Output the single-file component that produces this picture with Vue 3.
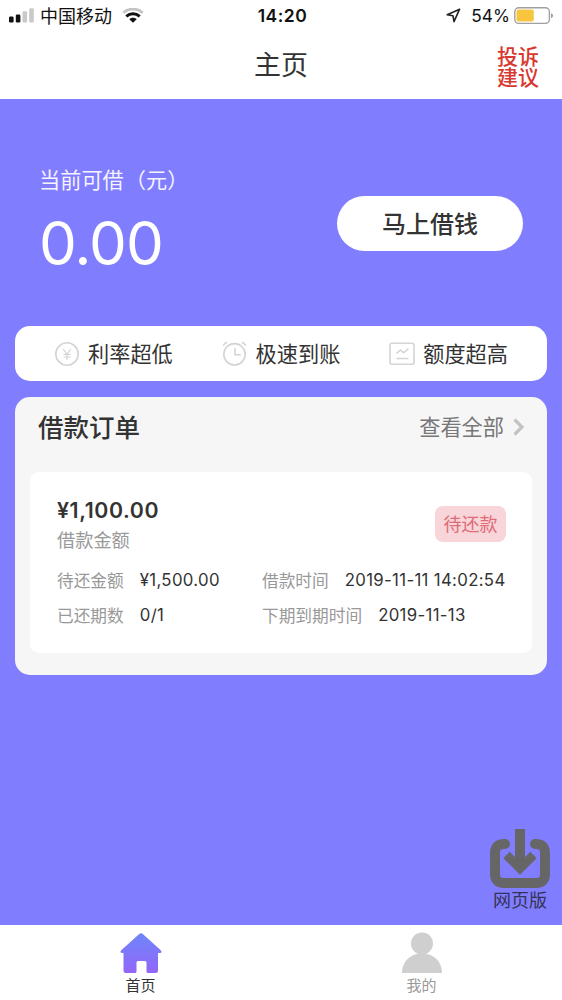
<script setup>
const features = [
  { icon: 'yen', label: '利率超低' },
  { icon: 'clock', label: '极速到账' },
  { icon: 'chart', label: '额度超高' },
]
const details = [
  [
    { label: '待还金额', value: '¥1,500.00' },
    { label: '借款时间', value: '2019-11-11 14:02:54' },
  ],
  [
    { label: '已还期数', value: '0/1' },
    { label: '下期到期时间', value: '2019-11-13' },
  ],
]
</script>

<template>
  <div class="screen">
    <header>
      <div class="status">
        <div class="carrier">
          <svg width="26" height="16" viewBox="0 0 26 16">
            <rect x="0" y="8.5" width="4.6" height="6" rx="1.3" fill="#111" />
            <rect x="6.8" y="6.5" width="4.6" height="8" rx="1.3" fill="#111" />
            <rect x="13.5" y="3.3" width="4.6" height="11.2" rx="1.3" fill="#c9c9c9" />
            <rect x="20.2" y=".2" width="4.6" height="14.3" rx="1.3" fill="#c9c9c9" />
          </svg>
          <span class="carrier-name">中国移动</span>
          <svg class="wifi" width="22" height="16" viewBox="0 0 22 16" fill="none">
            <path d="M1.3 4.8C6.6-.2 15.4-.2 20.7 4.8" stroke="#c4c4c4" stroke-width="2.7" />
            <path d="M4.3 8.3C8.2 4.9 13.8 4.9 17.7 8.3" stroke="#111" stroke-width="3" />
            <path d="M7.3 11.3C9.3 9.3 12.7 9.3 14.7 11.3L11 14.8Z" fill="#111" />
          </svg>
        </div>
        <span class="time">14:20</span>
        <div class="power">
          <svg width="15" height="15" viewBox="0 0 15 15">
            <path d="M13.6 1.2 1.2 6.8l5.8 1 1 5.8z" fill="none" stroke="#222" stroke-width="1.6" stroke-linejoin="round" />
          </svg>
          <span class="percent">54%</span>
          <svg width="41" height="18" viewBox="0 0 41 18">
            <rect x=".8" y=".8" width="34.6" height="15.6" rx="4" fill="#fff" stroke="#a0a0a0" stroke-width="1.4" />
            <rect x="2.5" y="2.6" width="17.3" height="12" rx="2" fill="#f7c63e" />
            <path d="M37 6.2c2.8.8 2.8 4 0 4.8z" fill="#a0a0a0" />
          </svg>
        </div>
      </div>
      <div class="navbar">
        <h1>主页</h1>
        <a class="feedback"><span>投诉</span><span>建议</span></a>
      </div>
    </header>

    <main>
      <section class="hero">
        <div>
          <p class="hero-label">当前可借<span class="unit">（元）</span></p>
          <p class="hero-amount">0.00</p>
        </div>
        <button class="borrow">马上借钱</button>
      </section>

      <section class="features">
        <div v-for="f in features" :key="f.icon" class="feature">
          <svg width="26" height="26" viewBox="0 0 26 26" fill="none" stroke="#d4d4d4" stroke-width="1.6">
            <template v-if="f.icon === 'yen'">
              <circle cx="13" cy="13" r="11.2" />
              <path d="m9.2 8 3.8 5.3L16.8 8M13 13v6M9.5 13.3h7M9.5 16h7" stroke-width="1.2" />
            </template>
            <template v-else-if="f.icon === 'clock'">
              <circle cx="12.5" cy="13.3" r="10.7" />
              <path d="M13 7.3v6.5H18.8M1.2 4.6C2 3 3.4 1.9 5 1.3M20 1.3C21.6 1.9 23 3 23.8 4.6" />
            </template>
            <template v-else>
              <rect x="1" y="2.3" width="24" height="21" rx="2" />
              <path d="m7.5 12.5 4-3.5 3 2.8 5-4.3M7.5 17.5h12" />
            </template>
          </svg>
          <span>{{ f.label }}</span>
        </div>
      </section>

      <section class="orders">
        <div class="orders-head">
          <h2>借款订单</h2>
          <a class="more">
            <span>查看全部</span>
            <svg width="12" height="18" viewBox="0 0 12 18" fill="none" stroke="#c3c3c5" stroke-width="3.2">
              <path d="m1.5 1.5 7.5 7.5-7.5 7.5" />
            </svg>
          </a>
        </div>
        <article class="order">
          <div class="order-top">
            <div>
              <p class="amount">¥1,100.00</p>
              <p class="amount-label">借款金额</p>
            </div>
            <span class="badge">待还款</span>
          </div>
          <div v-for="(row, i) in details" :key="i" class="row">
            <div v-for="d in row" :key="d.label" class="detail">
              <span class="key">{{ d.label }}</span>
              <span class="value">{{ d.value }}</span>
            </div>
          </div>
        </article>
      </section>

      <a class="web">
        <svg width="62" height="62" viewBox="0 0 62 62" fill="none" stroke="#666" stroke-width="10">
          <path d="M16 16h-1C9 16 6 19 6 25v21c0 6 3 9 9 9h32c6 0 9-3 9-9V25c0-6-3-9-9-9h-1" stroke-linecap="round" />
          <path d="M31 1v37" />
          <path d="M17.5 27 31 40.500 44.500 27" stroke-width="9" />
        </svg>
        <span>网页版</span>
      </a>
    </main>

    <nav class="tabs">
      <a class="tab active">
        <svg width="42" height="42" viewBox="0 0 42 42">
          <defs>
            <linearGradient id="house" x1="0" y1="0" x2="0" y2="1">
              <stop offset="0" stop-color="#6e86fa" />
              <stop offset="1" stop-color="#9366fa" />
            </linearGradient>
          </defs>
          <path d="M19.5 1.8Q21 .5 22.5 1.8L40.5 18q2.500 3-1 3H38v17.500q0 2.500-2.500 2.500H28q-1.500 0-1.500-1.500V30.500q0-1.500-1.500-1.500h-7q-1.500 0-1.500 1.500v9q0 1.500-1.500 1.500H6q-2.500 0-2.500-2.500V21h-1q-3.500 0-1-3z" fill="url(#house)" />
        </svg>
        <span>首页</span>
      </a>
      <a class="tab">
        <svg width="42" height="42" viewBox="0 0 42 42" fill="#cfcfcf">
          <circle cx="21" cy="11.5" r="11" />
          <path d="M1 41C1 29 10 21.500 21 21.500S41 29 41 41z" />
        </svg>
        <span>我的</span>
      </a>
    </nav>
  </div>
</template>

<style>
body {
  margin: 0;
}
</style>

<style scoped>
.screen {
  width: 562px;
  height: 1000px;
  display: flex;
  flex-direction: column;
  overflow: hidden;
  background: #807dff;
  color: #333;
  font-family: Inter, "Noto Sans CJK SC", sans-serif;
}
h1, h2, p {
  margin: 0;
  font-weight: 400;
}
svg {
  display: block;
  flex: none;
}
header {
  height: 99px;
  background: #fff;
}
.status {
  height: 31px;
  display: grid;
  grid-template-columns: 1fr auto 1fr;
  align-items: center;
  padding: 0 8px 0 9px;
  color: #111;
}
.carrier, .power {
  display: flex;
  align-items: center;
}
.carrier-name {
  margin-left: 5px;
  padding-top: 2px;
  font-size: 18px;
  line-height: 29px;
}
.wifi {
  margin-left: 10px;
}
.time {
  padding-left: 2px;
  font-size: 17.5px;
  font-weight: 600;
  letter-spacing: 0.5px;
}
.power {
  justify-content: flex-end;
  margin-right: -1px;
}
.percent {
  margin: 0 4px 0 10px;
  font-size: 17.3px;
}
.navbar {
  height: 68px;
  display: grid;
  grid-template-columns: 1fr auto 1fr;
  align-items: center;
}
h1 {
  grid-column: 2;
  margin-top: 1px;
  font-size: 27px;
  line-height: 67px;
}
.feedback {
  justify-self: end;
  display: flex;
  flex-direction: column;
  margin: 1px 23px 0 0;
  color: #d8382f;
  font-family: "Noto Sans CJK SC", sans-serif;
  font-size: 21px;
  font-weight: 500;
  line-height: 21px;
}
main {
  height: 826px;
  padding: 0 15px;
  position: relative;
}
.hero {
  height: 227px;
  box-sizing: border-box;
  padding: 66px 24px 0 24px;
  display: flex;
  justify-content: space-between;
  color: #fff;
}
.hero-label {
  font-size: 21.2px;
  line-height: 31px;
  color: #f4f3ff;
}
.unit {
  margin-left: 1px;
}
.hero-amount {
  margin-top: 11px;
  font-size: 60px;
  line-height: 72px;
  letter-spacing: -1px;
}
.borrow {
  width: 186px;
  height: 55px;
  margin-top: 31px;
  padding: 2px 0 0;
  border: 0;
  border-radius: 28px;
  background: #fff;
  color: #333;
  font: inherit;
  font-size: 24px;
  font-weight: 500;
  line-height: 53px;
}
.features {
  height: 55px;
  display: flex;
  justify-content: space-between;
  align-items: center;
  padding: 0 39px;
  border-radius: 15px;
  background: #fff;
}
.feature {
  display: flex;
  align-items: center;
  gap: 8px;
  font-size: 21.2px;
  line-height: 53px;
}
.feature span {
  padding-top: 2px;
}
.orders {
  height: 278px;
  box-sizing: border-box;
  margin-top: 16px;
  padding: 0 15px;
  border-radius: 15px;
  background: #f6f6f7;
}
.orders-head {
  height: 75px;
  box-sizing: border-box;
  padding: 0 7px 16px 8px;
  display: flex;
  align-items: center;
  justify-content: space-between;
}
h2 {
  padding-top: 2px;
  font-size: 25.5px;
  font-weight: 500;
  line-height: 58px;
}
.more {
  display: flex;
  align-items: center;
  gap: 9px;
  color: #777;
  font-size: 21.2px;
  line-height: 30px;
}
.order {
  height: 181px;
  box-sizing: border-box;
  padding: 24px 26px 0 27px;
  border-radius: 9px;
  background: #fff;
}
.order-top {
  height: 67px;
  display: flex;
  justify-content: space-between;
}
.amount {
  font-size: 21.3px;
  font-weight: 600;
  line-height: 29px;
  letter-spacing: 0.6px;
}
.amount-label {
  color: #999;
  font-size: 18.2px;
  line-height: 30px;
}
.badge {
  width: 71px;
  height: 36px;
  box-sizing: border-box;
  margin-top: 10px;
  padding-top: 1px;
  border-radius: 8px;
  background: #f8d5d8;
  color: #df6b78;
  font-size: 18px;
  line-height: 35px;
  text-align: center;
}
.row {
  height: 35px;
  display: grid;
  grid-template-columns: 205px 1fr;
  align-items: center;
  font-size: 16.7px;
  line-height: 35px;
}
.detail {
  display: flex;
  gap: 16px;
  white-space: nowrap;
}
.key {
  padding-top: 1px;
  color: #999;
}
.value {
  font-size: 16.8px;
  letter-spacing: 0.32px;
}
.web {
  position: absolute;
  right: 11px;
  bottom: 14px;
  width: 62px;
  display: flex;
  flex-direction: column;
  align-items: center;
  color: #333355;
  font-size: 18px;
  line-height: 21px;
}
.tabs {
  height: 75px;
  display: grid;
  grid-template-columns: 1fr 1fr;
  background: #fff;
}
.tab {
  display: flex;
  flex-direction: column;
  align-items: center;
  padding-top: 7px;
  color: #999;
  font-size: 15px;
  line-height: 24px;
}
.active {
  color: #333;
}
</style>
